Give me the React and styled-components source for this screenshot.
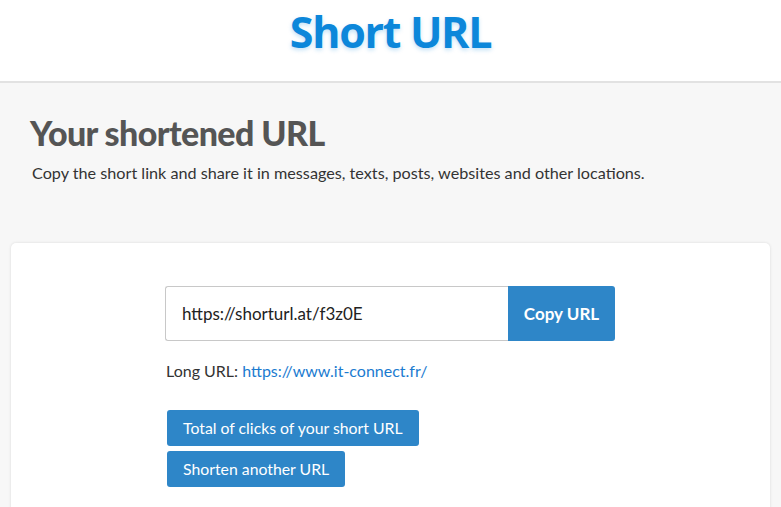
import React from 'react';
import styled, { createGlobalStyle } from 'styled-components';

const GlobalStyle = createGlobalStyle`
  html, body {
    margin: 0;
    padding: 0;
    background: #f7f7f7;
    font-family: Lato, 'Liberation Sans', sans-serif;
  }
`;

const Header = styled.header`
  background: #fff;
  height: 81px;
  border-bottom: 2px solid #e2e2e2;
  display: flex;
  justify-content: center;
`;

const Logo = styled.h1`
  margin: 0;
  padding-top: 2px;
  font-family: 'Open Sans', sans-serif;
  font-weight: 700;
  font-size: 43px;
  letter-spacing: -1.3px;
  color: #0c87da;
  text-shadow: 0 2px 4px rgba(12, 135, 218, 0.25);
`;

const Intro = styled.section`
  padding: 28px 30px 0;
`;

const Title = styled.h2`
  margin: 0;
  font-family: Lato, sans-serif;
  font-weight: 900;
  font-size: 34px;
  letter-spacing: -0.6px;
  color: #555;
  line-height: 44px;
`;

const Lead = styled.p`
  margin: 8px 0 0 2px;
  font-size: 16.2px;
  color: #333;
`;

const Card = styled.main`
  margin: 61px 11px 0 11px;
  background: #fff;
  border-radius: 5px;
  box-shadow: 0 0 3px rgba(0, 0, 0, 0.12);
  padding: 43px 0 40px;
  display: flex;
  justify-content: center;
`;

const Column = styled.div`
  width: 450px;
  margin-left: -1px;
`;

const InputRow = styled.div`
  display: flex;
  height: 55px;
`;

const UrlField = styled.input`
  flex: 1;
  min-width: 0;
  box-sizing: border-box;
  border: 1px solid #c8c8c8;
  border-right: none;
  border-radius: 3px 0 0 3px;
  padding: 0 16px;
  font-family: Lato, sans-serif;
  font-size: 17px;
  color: #222;
  outline: none;
`;

const CopyButton = styled.button`
  width: 107px;
  border: none;
  border-radius: 0 3px 3px 0;
  background: #2e86c8;
  color: #fff;
  font-family: Lato, sans-serif;
  font-weight: 700;
  font-size: 17px;
`;

const LongUrl = styled.p`
  margin: 20px 0 0 1px;
  font-size: 16px;
  color: #333;

  a {
    color: #1b7bd0;
    text-decoration: none;
  }
`;

const Actions = styled.div`
  margin: 30px 0 0 2px;
  display: flex;
  flex-direction: column;
  align-items: flex-start;
  gap: 5px;
`;

const ActionButton = styled.button`
  height: 36px;
  padding: 0 16px 2px;
  border: none;
  border-radius: 3px;
  background: #2e86c8;
  color: #fff;
  font-family: Lato, sans-serif;
  font-size: 15.8px;
`;

export default function App() {
  return (
    <>
      <GlobalStyle />
      <Header>
        <Logo>Short URL</Logo>
      </Header>
      <Intro>
        <Title>Your shortened URL</Title>
        <Lead>
          Copy the short link and share it in messages, texts, posts, websites and other locations.
        </Lead>
      </Intro>
      <Card>
        <Column>
          <InputRow>
            <UrlField readOnly value="https://shorturl.at/f3z0E" />
            <CopyButton>Copy URL</CopyButton>
          </InputRow>
          <LongUrl>
            Long URL: <a href="#">https://www.it-connect.fr/</a>
          </LongUrl>
          <Actions>
            <ActionButton>Total of clicks of your short URL</ActionButton>
            <ActionButton>Shorten another URL</ActionButton>
          </Actions>
        </Column>
      </Card>
    </>
  );
}
